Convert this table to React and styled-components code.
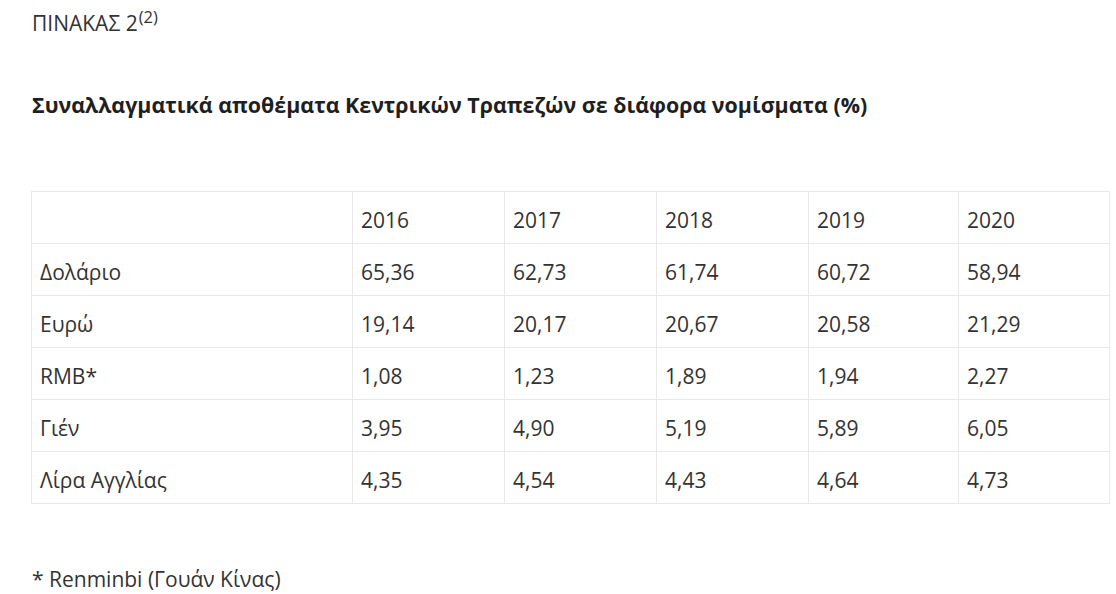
import React from "react";
import styled, { createGlobalStyle } from "styled-components";

const GlobalStyle = createGlobalStyle`
  body {
    margin: 0;
    background: #ffffff;
    font-family: "Open Sans", "Noto Sans", sans-serif;
    color: #222222;
  }
`;

const Page = styled.div`
  width: 1116px;
  height: 594px;
  padding: 8px 7px 0 32px;
  box-sizing: border-box;
  overflow: hidden;
`;

const TableLabel = styled.p`
  margin: 0;
  font-size: 21px;
  line-height: 30px;
  color: #333333;
  sup {
    font-size: 16.5px;
    vertical-align: 8px;
    line-height: 0;
    margin-left: 1px;
  }
`;

const Heading = styled.p`
  margin: 52px 0 0;
  font-size: 21.4px;
  font-weight: 700;
  line-height: 30px;
  color: #1f1f1f;
`;

const Table = styled.table`
  margin: 71px 0 0 -1px;
  width: 1078px;
  border-collapse: collapse;
  table-layout: fixed;
  font-size: 21px;
  color: #333333;
`;

const Col = styled.col`
  width: ${(p) => p.$w}px;
`;

const Cell = styled.td`
  height: 52px;
  padding: 5px 8px 0;
  box-sizing: border-box;
  border: 1px solid #e9e9e9;
  text-align: left;
  vertical-align: middle;
`;

const Footnote = styled.p`
  margin: 60px 0 0;
  font-size: 21px;
  line-height: 30px;
  color: #333333;
`;

const years = ["2016", "2017", "2018", "2019", "2020"];
const colWidths = [321, 152, 152, 152, 150, 151];

const rows = [
  { name: "Δολάριο", values: ["65,36", "62,73", "61,74", "60,72", "58,94"] },
  { name: "Ευρώ", values: ["19,14", "20,17", "20,67", "20,58", "21,29"] },
  { name: "RMB*", values: ["1,08", "1,23", "1,89", "1,94", "2,27"] },
  { name: "Γιέν", values: ["3,95", "4,90", "5,19", "5,89", "6,05"] },
  { name: "Λίρα Αγγλίας", values: ["4,35", "4,54", "4,43", "4,64", "4,73"] },
];

export default function App() {
  return (
    <>
      <GlobalStyle />
      <Page>
        <TableLabel>
          ΠΙΝΑΚΑΣ 2<sup>(2)</sup>
        </TableLabel>
        <Heading>
          Συναλλαγματικά αποθέματα Κεντρικών Τραπεζών σε διάφορα νομίσματα (%)
        </Heading>
        <Table>
          <colgroup>
            {colWidths.map((w, i) => (
              <Col key={i} $w={w} />
            ))}
          </colgroup>
          <tbody>
            <tr>
              <Cell />
              {years.map((y) => (
                <Cell key={y}>{y}</Cell>
              ))}
            </tr>
            {rows.map((row) => (
              <tr key={row.name}>
                <Cell>{row.name}</Cell>
                {row.values.map((v, i) => (
                  <Cell key={i}>{v}</Cell>
                ))}
              </tr>
            ))}
          </tbody>
        </Table>
        <Footnote>* Renminbi (Γουάν Κίνας)</Footnote>
      </Page>
    </>
  );
}
